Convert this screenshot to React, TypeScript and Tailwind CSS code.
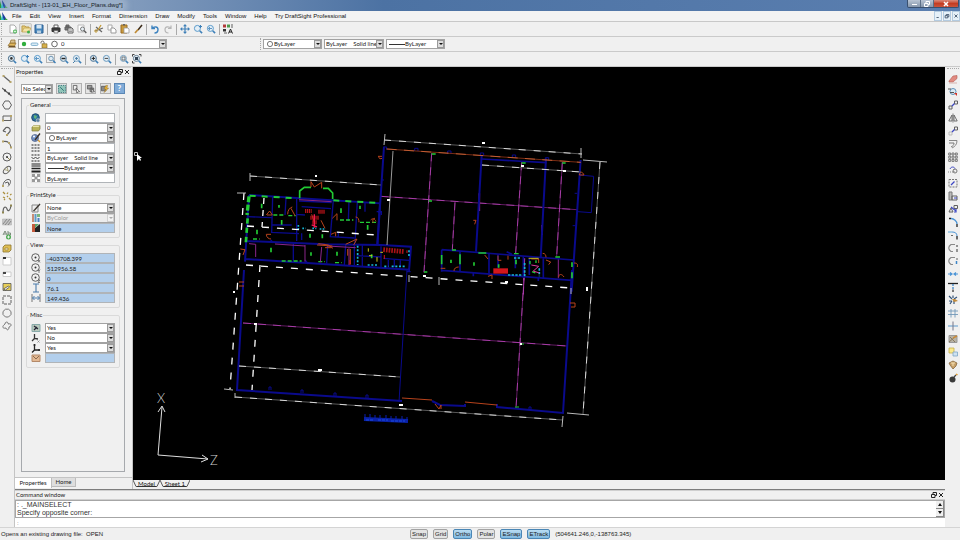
import type { ReactNode } from 'react'

/* ── Shared bits ──────────────────────────────── */

const INK = '#606060'
const BLUE = '#3f80b8'

function Icon({ children, className = '' }: { children: ReactNode; className?: string }) {
  return (
    <svg viewBox="0 0 10 10" className={`size-[10px] shrink-0 ${className}`} fill="none" stroke={INK} aria-hidden="true">
      {children}
    </svg>
  )
}

function ToolButton({ label, active, children }: { label: string; active?: boolean; children: ReactNode }) {
  return (
    <button
      aria-label={label}
      className={`flex size-[13px] shrink-0 items-center justify-center rounded-xs ${active ? 'bg-[#e4e4de] outline -outline-offset-1 outline-[#c6c6c6]' : ''}`}>
      <Icon>{children}</Icon>
    </button>
  )
}

function Separator() {
  return <span className="mx-px h-[11px] w-[2px] shrink-0 border-r border-[#a9a9a9]" />
}

function Grip({ className = '' }: { className?: string }) {
  return <span className={`h-3 w-[2px] shrink-0 border-l border-dotted border-[#a8a8a8] ${className}`} />
}

type ComboProps = {
  label: string
  value: string
  className?: string
  pad?: string
  disabled?: boolean
  prefix?: ReactNode
}

function Combo({ label, value, className = '', pad = 'pl-px', disabled, prefix }: ComboProps) {
  return (
    <span className={`grid h-[10px] items-center border border-[#a2a2a2] ${disabled ? 'bg-[#ececec] text-[#999]' : 'bg-white text-[#222]'} ${className}`}>
      <select
        aria-label={label}
        disabled={disabled}
        className={`col-start-1 row-start-1 h-2 w-full appearance-none whitespace-pre text-[6px]/[8px] ${pad}`}>
        <option>{value}</option>
      </select>
      <span className="pointer-events-none col-start-1 row-start-1 flex items-center justify-self-start">{prefix}</span>
      <span
        className={`pointer-events-none col-start-1 row-start-1 flex h-2 w-[7px] items-center justify-center justify-self-end border ${disabled ? 'border-[#d0d0d0] bg-[#f2f2f2]' : 'border-[#9a9a9a] bg-[#dcdcdc]'}`}>
        <svg viewBox="0 0 4 2" className="h-[2px] w-1 shrink-0">
          <path d="M0 0h4L2 2z" fill={disabled ? '#aaa' : '#111'} />
        </svg>
      </span>
    </span>
  )
}

const ring = (
  <svg viewBox="0 0 8 8" className="ml-0.5 size-2" fill="#fff" stroke="#555" strokeWidth=".8">
    <circle cx="4" cy="4" r="2.6" />
  </svg>
)

const rule = <span className="ml-0.5 h-px w-4 bg-[#333]" />

function Lens({ children, color = BLUE }: { children?: ReactNode; color?: string }) {
  return (
    <>
      <circle cx="4.4" cy="4.4" r="3" fill="#e3eef6" stroke={color} />
      <path d="M6.7 6.7l2.4 2.4" stroke={BLUE} strokeWidth="1.6" />
      {children}
    </>
  )
}

/* ── Title and menu ───────────────────────────── */

function Logo() {
  return (
    <svg viewBox="0 0 8 9" className="h-[9px] w-2 shrink-0" aria-hidden="true">
      <path d="M0 1v7h2z" fill="#2b9d3f" />
      <path d="M2 0l5 8H3z" fill="#1d3b9b" />
      <path d="M2 3l2 5H1z" fill="#35b9c9" />
      <path d="M5 6l3 2H5z" fill="#3caa3c" />
    </svg>
  )
}

function TitleBar() {
  return (
    <header className="flex h-[11px] items-start bg-linear-to-r from-[#9db0c9] via-[#4c72a3] via-40% to-[#5b7fb0]">
      <Logo />
      <h1 className="rounded-full bg-[#a9bbd1]/60 px-0.5 text-[6px]/[11px] text-[#161c26] shadow-[0_0_5px_3px_#a9bbd199]">
        DraftSight - [13-01_EH_Floor_Plans.dwg*]
      </h1>
      <div className="mr-px ml-auto flex h-2 overflow-hidden rounded-b-xs border border-t-0 border-[#39506f]">
        <button aria-label="Minimize" className="flex w-[13px] items-end justify-center border-r border-[#5d6f87] bg-linear-to-b from-[#b9c5d4] to-[#8797ac] pb-[2px]">
          <span className="h-px w-[5px] bg-white" />
        </button>
        <button aria-label="Restore" className="flex w-[13px] items-center justify-center border-r border-[#5d6f87] bg-linear-to-b from-[#b9c5d4] to-[#8797ac]">
          <svg viewBox="0 0 6 6" className="size-[6px]" fill="none" stroke="#fff">
            <path d="M2 2V.5h3.5v3H4M.5 2.5H4v3H.5z" />
          </svg>
        </button>
        <button aria-label="Close" className="flex w-6 items-center justify-center bg-linear-to-b from-[#d98b7c] via-[#c43c22] to-[#c9543c]">
          <svg viewBox="0 0 6 6" className="size-[6px]" stroke="#fff" strokeWidth="1.5">
            <path d="M1 1l4 4M5 1L1 5" />
          </svg>
        </button>
      </div>
    </header>
  )
}

const MENUS = ['File', 'Edit', 'View', 'Insert', 'Format', 'Dimension', 'Draw', 'Modify', 'Tools', 'Window', 'Help', 'Try DraftSight Professional']

const MDI_BUTTONS = [
  ['Minimize drawing', 'M2 6h3'],
  ['Restore drawing', 'M3 3.5V2h3.5v3H5M1.5 3.5H5v3H1.5z'],
  ['Close drawing', 'M2 2l4 4M6 2L2 6'],
]

function MenuBar() {
  return (
    <nav className="flex h-[11px] items-center border-b border-[#c8c8c8] bg-[#f3f3f3] text-[6px]/[10px] text-[#111]">
      <Logo />
      <div className="ml-1 flex gap-2">
        {MENUS.map((m) => (
          <button key={m} className="whitespace-nowrap">{m}</button>
        ))}
      </div>
      <div className="ml-auto flex gap-px">
        {MDI_BUTTONS.map(([name, d]) => (
          <button key={name} aria-label={name} className="border border-[#b4cbe0] bg-[#e6f0f8]">
            <svg viewBox="0 0 8 8" className="h-2 w-[6px]" fill="none" stroke="#44576e" strokeWidth="1.2">
              <path d={d} />
            </svg>
          </button>
        ))}
      </div>
    </nav>
  )
}

/* ── Toolbars ─────────────────────────────────── */

const page = 'M2 1h4l2 2v6H2z'

function StandardBar() {
  return (
    <div className="flex h-[15px] items-center border-b border-[#cacaca]">
      <Grip className="mr-[3px] ml-px" />
      <ToolButton label="New">
        <path d={page} fill="#fff" stroke="#aaa" />
        <circle cx="7" cy="7.5" r="2" fill="#3fae49" stroke="none" />
        <path d="M7 6.2v2.6M5.7 7.5h2.6" stroke="#fff" strokeWidth=".7" />
      </ToolButton>
      <ToolButton label="Open" active>
        <path d="M1 8V2h3l1 1h3v2" fill="#e5cd7a" stroke="#bd9d4b" />
        <path d="M1 8l2-4h7L8 8z" fill="#f3e4a6" stroke="#bd9d4b" strokeWidth=".7" />
        <circle cx="7.5" cy="8" r="1.5" fill="#3fae49" stroke="none" />
      </ToolButton>
      <ToolButton label="Save">
        <path d="M1 1h8v8H1z" fill="#4787bd" stroke="#2b5f93" />
        <path d="M2.5 1h5v3.5h-5z" fill="#d7e7f3" stroke="none" />
        <path d="M3 6.5h4V9H3z" fill="#b9cfe0" stroke="none" />
      </ToolButton>
      <Separator />
      <ToolButton label="Print">
        <path d="M3 1h4v3H3z" fill="#fff" />
        <path d="M1 4h8v3.5H1z" fill="#3c3c3c" stroke="#333" />
        <path d="M3 6.5h4V9H3z" fill="#eee" strokeWidth=".7" />
      </ToolButton>
      <ToolButton label="Print preview">
        <path d="M2 1h3v2H2zM1 3h6v3H1z" fill="#777" />
        <path d="M4 4h4l1 1v4H4z" fill="#eee" />
        <path d="M5 6h3M5 7.5h3" strokeWidth=".6" />
      </ToolButton>
      <ToolButton label="Page setup">
        <path d="M1 1h6v7H1z" fill="#fff" stroke="#bbb" />
        <circle cx="5.5" cy="5" r="2" fill="#e8f0f5" strokeWidth=".8" />
        <path d="M7 6.5L9.3 9" strokeWidth="1.4" />
      </ToolButton>
      <Separator />
      <ToolButton label="Cut">
        <path d="M1 7l8-3M2 3l6 5" stroke="#666" strokeWidth="1.2" />
        <circle cx="2" cy="7" r="1.2" stroke="#c29a36" />
        <path d="M7 1L4 6" stroke="#c29a36" strokeWidth="1.3" />
      </ToolButton>
      <ToolButton label="Copy">
        <path d="M1 1h4v5H1z" fill="#fff" stroke="#aaa" />
        <path d="M4 4h3l2 2v3H4z" fill="#fff" stroke="#999" />
      </ToolButton>
      <ToolButton label="Paste">
        <path d="M1 1h6v8H1z" fill="#c99a3d" stroke="#9b6d22" />
        <path d="M3 .8h2" stroke="#666" strokeWidth="1.4" />
        <path d="M4 4h4l1 1v4H4z" fill="#fff" stroke="#999" strokeWidth=".8" />
      </ToolButton>
      <ToolButton label="Property painter">
        <path d="M9 1L5 6" stroke="#3a2a18" strokeWidth="1.5" />
        <path d="M5 5.5L2 9" stroke="#c08b35" strokeWidth="1.7" />
      </ToolButton>
      <Separator />
      <ToolButton label="Undo">
        <path d="M2 1.5v3h3M2 4.5C4 2 8 2.5 8 5.5 8 8 6 9 4.500 9" stroke="#3c82bf" strokeWidth="1.4" />
      </ToolButton>
      <ToolButton label="Redo">
        <path d="M8 1.5v3H5M8 4.5C6 2 2 2.5 2 5.5 2 8 4 9 5.500 9" stroke="#b5b5b5" strokeWidth="1.2" />
      </ToolButton>
      <Separator />
      <ToolButton label="Pan">
        <path d="M5 0l2 2.2H3zM5 10l2-2.2H3zM0 5l2.2-2v4zM10 5L7.800 3v4z" fill={BLUE} stroke="none" />
        <path d="M5 2v6M2 5h6" stroke={BLUE} strokeWidth="1.2" />
      </ToolButton>
      <ToolButton label="Zoom dynamic">
        <Lens color="#5b9bcb"><path d="M7.5 1v3M6 2.500h3" stroke={BLUE} /></Lens>
      </ToolButton>
      <ToolButton label="Zoom previous">
        <Lens color="#5b9bcb"><path d="M6 4.5H2.500L4 3M2.500 4.500L4 6" stroke={BLUE} strokeWidth=".8" /></Lens>
      </ToolButton>
      <Separator />
      <ToolButton label="Properties">
        <path d="M0 .5h3v3H0z" fill="#b23b3b" stroke="none" />
        <path d="M4 .5h3v3H4z" fill="#4b9a4b" stroke="none" />
        <path d="M0 5h3v2.5H0z" fill="#333" stroke="none" />
        <path d="M8 1h2M8 3h2M1 9h3" />
        <path d="M5.5 9.5L7.500 5l2 4.500M6.200 8h2.500" stroke="#222" />
      </ToolButton>
    </div>
  )
}

function LayerBar() {
  return (
    <div className="flex h-[15px] items-center border-b border-[#cacaca] font-[Lato,sans-serif]">
      <Grip className="mr-[3px] ml-px" />
      <button aria-label="Layers manager" className="mr-px flex w-[11px] justify-center">
        <Icon>
          <path d="M1 6.5L3 4h6L7.500 7z" fill="#e3b95d" stroke="#8c6a2c" strokeWidth=".7" />
          <path d="M1 8.5L2 7h6l1 1.500z" fill="#705327" stroke="none" />
          <path d="M4 1h4v3H3z" fill="#d9c190" stroke="#8c6a2c" strokeWidth=".7" />
        </Icon>
      </button>
      <Combo
        label="Layer"
        value="0"
        className="w-[149px]"
        pad="pl-[42px]"
        prefix={
          <svg viewBox="0 0 42 8" className="h-2 w-[42px]" fill="none">
            <circle cx="5" cy="4" r="2.2" fill="#2fae3c" />
            <rect x="12" y="3" width="7" height="2.5" rx="1.2" fill="#d9ebf5" stroke="#5e9bc2" strokeWidth=".7" />
            <path d="M22 3.5V2.2c0-1.500 3-1.500 3 0V4" stroke="#666" />
            <path d="M23 3.8h5V8h-5z" fill="#d6b04c" stroke="#7e6427" strokeWidth=".6" />
            <circle cx="35.5" cy="4" r="2.8" fill="#fff" stroke="#444" strokeWidth=".8" />
          </svg>
        }
      />
      <Grip className="mr-px ml-[93px]" />
      <Combo label="Line color" value="ByLayer" className="w-[59px]" pad="pl-[10px]" prefix={ring} />
      <Combo label="Line style" value={'ByLayer\u2003 Solid line'} className="ml-[2px] w-[60px]" />
      <Combo label="Line weight" value="ByLayer" className="ml-[2px] w-[59px]" pad="pl-[18px]" prefix={rule} />
    </div>
  )
}

function ZoomBar() {
  return (
    <div className="flex h-[15px] items-center border-b border-[#cacaca]">
      <Grip className="mr-[2px] ml-px" />
      <ToolButton label="Zoom in on point"><Lens color="#456b88"><circle cx="4.4" cy="4.4" r="1.3" fill="#333" stroke="none" /></Lens></ToolButton>
      <ToolButton label="Zoom dynamic view"><Lens color="#5b9bcb"><path d="M7.5 1v3M6 2.500h3" stroke={BLUE} /></Lens></ToolButton>
      <ToolButton label="Zoom back"><Lens color="#5b9bcb"><path d="M6 4.5H2.500L4 3M2.500 4.500L4 6" stroke={BLUE} strokeWidth=".8" /></Lens></ToolButton>
      <ToolButton label="Zoom window">
        <path d="M.5.5h8v8h-8z" stroke="#777" strokeDasharray="1 1" />
        <circle cx="5" cy="4.5" r="2.3" fill="#dfeaf2" stroke="#6e96b4" />
        <path d="M7 6.5L9.500 9" stroke={BLUE} strokeWidth="1.5" />
      </ToolButton>
      <ToolButton label="Zoom factor"><Lens color="#567f9f"><path d="M2.5 4.5h4" stroke="#222" strokeWidth="1.5" /></Lens></ToolButton>
      <ToolButton label="Zoom center"><Lens color="#7da7c6"><path d="M1 9l2-2M4.4 3v3M3 4.4h3" stroke="#4a7fa8" /></Lens></ToolButton>
      <Separator />
      <ToolButton label="Zoom in"><Lens color="#4c7495"><path d="M4.4 2.6v3.6M2.6 4.4h3.6" stroke="#222" /></Lens></ToolButton>
      <ToolButton label="Zoom out"><Lens color="#6b9cc0"><path d="M2.6 4.4h3.6" stroke="#444" /></Lens></ToolButton>
      <Separator />
      <ToolButton label="Zoom bounds"><Lens color="#79a0bd"><path d="M3 3h3v3H3z" strokeWidth=".8" /></Lens></ToolButton>
      <ToolButton label="Zoom fit">
        <Lens color="#667f94">
          <path d="M.5 2.5v-2h2M7 .5h2v2M.5 7v2h2" stroke="#444" />
          <path d="M3 3h3v3H3z" fill="#345" stroke="none" />
        </Lens>
      </ToolButton>
    </div>
  )
}

const DRAW_TOOLS: [string, ReactNode][] = [
  ['Line', <><path d="M1.5 2l7 6" strokeWidth="1.2" /><path d="M.5 1h2v2h-2zM7.5 7h2v2h-2z" fill="#b6a46a" stroke="none" /></>],
  ['Infinite line', <><path d="M0 1l9.5 8" strokeWidth="1.2" /><path d="M2 2.5h2v2H2zM6 5.500h2v2H6z" fill="#444" stroke="none" /></>],
  ['Polygon', <path d="M3 1h4l2.5 4L7 9H3L.5 5z" />],
  ['Rectangle', <><path d="M1 3h8v4.5H1z" /><path d="M0 6.5h2v2H0zM8 2h2v2H8z" fill="#b6a46a" stroke="none" /></>],
  ['Polyline', <><path d="M1 5l3-3.5c3-.5 5 1.500 4 4L5 9M1 5l3 1" strokeWidth="1.2" /><path d="M4 8h2v2H4z" fill="#b6a46a" stroke="none" /></>],
  ['Arc', <><path d="M1 2.5c5-1 7.500 2 8 6" strokeWidth="1.2" /><path d="M0 1.5h2v2H0zM6 3h2v2H6zM8 7.500h2v2H8z" fill="#b6a46a" stroke="none" /></>],
  ['Circle', <><circle cx="5" cy="5" r="4" /><path d="M5 5l3 3" stroke="#8e8550" /><circle cx="5" cy="5" r="1" fill="#333" stroke="none" /></>],
  ['Ellipse', <><ellipse cx="5" cy="5" rx="4.5" ry="2.5" transform="rotate(-45 5 5)" /><path d="M2 4.5l4 1M5 2l1.500 5" stroke="#8e8550" strokeWidth=".7" /></>],
  ['Elliptical arc', <><path d="M1 8c0-4 3-7 6-6.5 3 1 1 5-1 7" /><path d="M3 5l3-1 1 3" /><path d="M0 7h2v2H0z" fill="#b6a46a" stroke="none" /></>],
  ['Point', <path d="M1 1l2 2M6 1.5L5 3M1 6l2 1M5 5l1 1M8 4l1.500-1M7 7l2 2M2 9l1-1" stroke="#ab8f3c" strokeWidth="1.3" />],
  ['Spline', <><path d="M1 9c0-7 3-7 4-4s3 2 4-3" strokeWidth="1.2" /><path d="M8 .5h2v2H8zM0 7.5h2v2H0z" fill="#8e8550" stroke="none" /></>],
  ['Hatch', <><path d="M.5 2h9v6h-9z" fill="#c6c6c6" stroke="#aaa" strokeWidth=".5" /><path d="M1 7l4-5M3 8l5-6M6 8l3-4" stroke="#888" /></>],
  ['Note', <><path d="M1 5l2-4 2 4M2 4h2M6 1v4h2.5V3H6" stroke="#7a8b7a" /><circle cx="6.5" cy="7" r="2.5" fill="#4aa84f" stroke="none" /><path d="M6.5 5.5v3M5 7h3" stroke="#fff" strokeWidth=".8" /></>],
  ['Block', <><path d="M1 4l2-2h6v5l-2 2H1z" fill="#dfbf55" stroke="#8a742e" strokeWidth=".8" /><path d="M3 5h3v2H3z" fill="#f7ecc0" stroke="#8a742e" strokeWidth=".6" /></>],
  ['Insert block', <><path d="M1 1.5h8v7.500H1z" fill="#fff" stroke="#ccc" /><path d="M1 1h3v2H1z" fill="#333" stroke="none" /></>],
  ['Region', <><path d="M1 3h8v4.5H1z" fill="#fff" stroke="#ccc" /><path d="M1 3h3v2H1z" fill="#444" stroke="none" /></>],
  ['Mask', <><path d="M1 1.5h8v7H1z" fill="#e8cf58" stroke="#555" strokeWidth=".8" /><path d="M1.5 7l5-3 1 1-4 3z" fill="#f5f5f5" stroke="#444" strokeWidth=".7" /></>],
  ['Boundary', <path d="M1 1h8v8H1z" strokeDasharray="3 1" />],
  ['Ring', <path d="M3.5 1.2h3L9 3.500v3L6.500 9h-3L1 6.500v-3z" stroke="#777" />],
  ['Revision cloud', <path d="M3 3c0-3 4-2 3 0 4-1 4 2 1 3 0 3-2 4-3 1-4 1-4-2-1-4z" stroke="#777" />],
]

const MODIFY_TOOLS: [string, ReactNode][] = [
  ['Delete', <><path d="M1 7l4-5 4-.5v3L5 8H1z" fill="#e08a80" stroke="#b35a50" strokeWidth=".6" /><path d="M1 9h8" stroke="#d8b3ae" /></>],
  ['Smart select', <><circle cx="5" cy="4.5" r="3" fill="#dceaf4" stroke="#5c92ba" /><path d="M0 2h3M2 5.5h4" stroke="#555" /><path d="M6 6h3v3z" fill="#d4372c" stroke="none" /></>],
  ['Copy entity', <><path d="M1 6h3v3H1zM6.5 1h3v3h-3z" /><path d="M4 6l2.5-2.500" stroke="#3b46c4" strokeWidth="1.3" /></>],
  ['Mirror', <><path d="M5 .5v9" stroke="#777" /><path d="M4 2v6H.8zM6 2v6h3.2z" strokeWidth=".9" /></>],
  ['Move', <><path d="M1 6h3v3H1z" stroke="#bbb" /><path d="M6.5 1h3v3h-3z" /><path d="M4 6l2.5-2.500" stroke="#3b46c4" strokeWidth="1.3" /></>],
  ['Offset', <><path d="M1 1.5h8c0 4-2 6-5 7.500" stroke="#888" /><path d="M1 4h5c0 2-1 3-3 4" stroke="#777" /></>],
  ['Pattern', <path d="M.7 1h2v2h-2zM4 1h2v2H4zM7.3 1h2v2h-2zM.7 4.2h2v2h-2zM4 4.2h2v2H4zM7.3 4.2h2v2h-2zM.7 7.4h2v2h-2zM4 7.4h2v2H4zM7.3 7.4h2v2h-2z" strokeWidth=".8" />],
  ['Rotate', <><path d="M0 7h6V4" stroke="#888" strokeDasharray="1 1" /><circle cx="7" cy="6" r="2" stroke="#777" /><path d="M2 4c1-2.5 4-2.5 5-.5" stroke="#3b46c4" /></>],
  ['Scale', <><path d="M1 1.5h8V9H1z" stroke="#777" strokeDasharray="2 1" /><path d="M3 7l3.5-3.500" stroke="#3b46c4" strokeWidth="1.2" /></>],
  ['Stretch', <><path d="M1 1h3v8H1z" fill="#bbb" stroke="#777" /><path d="M4 5h5v4H4z" /><path d="M6 7h3" stroke="#3b46c4" /></>],
  ['Edit length', <><path d="M1 8l2-4 2 4zM6 1.5h3.500v3H6z" /><path d="M3 3l5 4M8 5v3H6" stroke="#3b46c4" strokeWidth="1.2" /></>],
  ['Fillet', <><path d="M1 1.5h2M9 7v3" stroke="#222" strokeWidth="1.3" /><path d="M3 1.5c3 0 6 3 6 5.500" stroke="#4b94d6" strokeWidth="1.3" /></>],
  ['Chamfer', <><path d="M0 2h4" stroke="#5aa5d8" /><path d="M4 2c3 0 5 1 5 4" stroke="#4b94d6" /><path d="M9 6v3.5M4 5v1" stroke="#222" strokeWidth="1.3" /></>],
  ['Trim', <><path d="M7 1.5H3c-3 2-3 5 0 7h2" stroke="#888" strokeWidth="1.2" /><path d="M9 2v2M9 6v3" strokeWidth="1.3" /></>],
  ['Extend', <><path d="M7 1.5H3c-3 2-3 5 0 7h2" stroke="#888" strokeWidth="1.2" /><path d="M9 2v2" /><path d="M8.5 5v3" stroke="#3c86c8" strokeWidth="1.5" /></>],
  ['Split', <path d="M0 5h3M7 5h3M2 3.5L4 5 2 6.500M8 3.500L6 5l2 1.500" stroke="#4b94d6" strokeWidth="1.2" />],
  ['Weld', <><path d="M0 1.5h10" stroke="#222" strokeWidth="1.3" /><path d="M5 2v5" stroke="#3c86c8" strokeWidth="1.3" strokeDasharray="2 1" /><path d="M5 7.5V10" stroke="#333" strokeWidth="1.3" /></>],
  ['Explode', <><path d="M1 1l3 3M5 .5V3M9 2L6 4M1 6h3M2 9l2-3M6 9V6" stroke="#35557a" strokeWidth="1.2" /><path d="M4 4h3l3 2-4 1z" fill="#c08a3c" stroke="none" /></>],
  ['Power trim', <path d="M0 3h10M0 6.5h10M3 1v8.500M7 1v8.500" stroke="#7398b9" strokeWidth=".9" />],
  ['Corner trim', <><path d="M0 5h10" stroke="#5b98cc" /><path d="M5 .5v9" stroke="#778" /></>],
  ['Edit hatch', <><path d="M1 1.5h8v7H1z" fill="#b8b3a6" stroke="#999" /><path d="M1 8l7-6M2 3l5 5" stroke="#88795f" /><path d="M5 4l4-2" stroke="#c98b3a" strokeWidth="1.5" /></>],
  ['Display order', <><path d="M1 1h5v5H1z" fill="#fbe98c" stroke="#c7b04c" strokeWidth=".8" /><path d="M5 5h4.5v4H5z" fill="#cfe2f1" stroke="#7ea6c7" strokeWidth=".8" /></>],
  ['Clean', <><path d="M1 3l4-2 4 2-1 3-3 3-3-4z" fill="#c6a06a" stroke="#7d5c30" strokeWidth=".7" /><path d="M3 3h4M5 3v3" stroke="#f4e0b4" /></>],
  ['Purge', <><circle cx="4.5" cy="6.5" r="3" fill="#3a3a3a" stroke="none" /><path d="M6 4l2-2" stroke="#444" strokeWidth="1.2" /><path d="M8 1l1.5 1" stroke="#e09a2d" strokeWidth="1.5" /></>],
]

function SideBar({ label, tools, className = '' }: { label: string; tools: [string, ReactNode][]; className?: string }) {
  return (
    <aside aria-label={label} className={`flex w-[15px] shrink-0 flex-col items-center pt-px ${className}`}>
      <span className="mb-[3px] w-3 border-t border-dotted border-[#a8a8a8]" />
      {tools.map(([name, art]) => (
        <ToolButton key={name} label={name}>{art}</ToolButton>
      ))}
    </aside>
  )
}

/* ── Properties dock ──────────────────────────── */

function DockButtons() {
  return (
    <span className="ml-auto flex gap-px">
      <button aria-label="Float">
        <svg viewBox="0 0 6 6" className="size-[6px]" fill="none" stroke="#222"><path d="M2 2V.5h3.5v3H4M.5 2.5H4v3H.5z" /></svg>
      </button>
      <button aria-label="Close">
        <svg viewBox="0 0 6 6" className="size-[6px]" stroke="#222"><path d="M1 1l4 4M5 1L1 5" /></svg>
      </button>
    </span>
  )
}

const target = (mark: ReactNode) => (
  <><circle cx="4.5" cy="4.5" r="3.8" /><circle cx="4.5" cy="4.5" r="1" fill="#333" stroke="none" />{mark}</>
)

type Field = { name: string; icon: ReactNode; value: string; kind: 'text' | 'locked' | 'combo'; pad?: string; prefix?: ReactNode; disabled?: boolean }

const GROUPS: { title: string; fields: Field[] }[] = [
  {
    title: 'General',
    fields: [
      { name: 'Hyperlink', kind: 'text', value: '', icon: <><circle cx="4.5" cy="4.5" r="3.8" fill="#2d6f9e" stroke="#1f4d70" /><path d="M3 2l3 1-1 3-2-1z" fill="#62b47a" stroke="none" /><circle cx="7" cy="7.5" r="1.8" fill="#5b7fa0" stroke="#ddd" strokeWidth=".6" /></> },
      { name: 'Layer', kind: 'combo', value: '0', icon: <><path d="M1 4l2-1.5h6V6L7.500 8H1z" fill="#b9b35a" stroke="#7d7939" strokeWidth=".7" /><path d="M1 4l2-1.5h6L7.500 4z" fill="#e9e4a8" stroke="none" /></> },
      { name: 'Line color', kind: 'combo', value: 'ByLayer', pad: 'pl-[10px]', prefix: ring, icon: <><circle cx="4" cy="5" r="3.5" fill="#6f8fc4" stroke="#4d5c80" strokeWidth=".7" /><path d="M9 .5L4 7" stroke="#3a2f28" strokeWidth="1.3" /><path d="M7 7l2 2" stroke="#d49a36" strokeWidth="1.3" /><circle cx="3" cy="3.5" r="1" fill="#fff" stroke="none" /></> },
      { name: 'Line scale', kind: 'text', value: '1', icon: <path d="M.5 2h9M.5 5h9M.5 8h9" stroke="#222" strokeWidth="1.2" strokeDasharray="2 1" /> },
      { name: 'Line style', kind: 'combo', value: 'ByLayer\u2003 Solid line', icon: <><path d="M.5 2h9M.5 8h9" stroke="#222" strokeWidth="1.2" strokeDasharray="2 1" /><path d="M.5 4l2 2 2-2 2 2 2-2" stroke="#444" /></> },
      { name: 'Line weight', kind: 'combo', value: 'ByLayer', pad: 'pl-[18px]', prefix: rule, icon: <><path d="M.5 1h9M.5 3h9" stroke="#222" /><path d="M.5 5.5h9" stroke="#222" strokeWidth="1.5" /><path d="M.5 8.5h9" stroke="#222" strokeWidth="2" /></> },
      { name: 'Transparency', kind: 'text', value: 'ByLayer', icon: <><path d="M.5.5h9v9h-9z" fill="#fff" stroke="#ccc" strokeWidth=".5" /><path d="M1 1h3v3H1zM6 1h3v3H6zM3.5 3.5h3v3h-3zM1 6h3v3H1zM6 6h3v3H6z" fill="#999" stroke="none" /></> },
    ],
  },
  {
    title: 'PrintStyle',
    fields: [
      { name: 'Print style', kind: 'combo', value: 'None', icon: <><path d="M1 2h6v7H1z" fill="#eee" stroke="#888" /><path d="M9 1L4 6.5M2.500 8l2-2" stroke="#3f3a33" strokeWidth="1.4" /></> },
      { name: 'Print style mode', kind: 'combo', value: 'ByColor', disabled: true, icon: <><path d="M1 1h2v8H1z" fill="#c98d76" stroke="none" /><path d="M3.5 1h2v8h-2z" fill="#5d9bc7" stroke="none" /><path d="M6 1h3v3H6z" fill="#7db57d" stroke="none" /><path d="M6.5 5h2v4h-2z" fill="#4a7fc0" stroke="none" /></> },
      { name: 'Print style table', kind: 'locked', value: 'None', icon: <><path d="M1 1h3v8H1z" fill="#c45a3c" stroke="none" /><path d="M4 9V5l5-4v8z" fill="#222" stroke="none" /><path d="M4 1h4L4 5z" fill="#5aa36a" stroke="none" /></> },
    ],
  },
  {
    title: 'View',
    fields: [
      { name: 'Center X', kind: 'locked', value: '-403708.399', icon: target(<path d="M7 7l2 2.5M9 7L7 9.500" strokeWidth=".8" />) },
      { name: 'Center Y', kind: 'locked', value: '512956.58', icon: target(<path d="M7 6.5L8 8l1-1.500M8 8v2" strokeWidth=".8" />) },
      { name: 'Center Z', kind: 'locked', value: '0', icon: target(<path d="M7 7h2L7 9.5h2" strokeWidth=".8" />) },
      { name: 'Height', kind: 'locked', value: '76.1', icon: <path d="M2 1h6M2 9h6M5 1.5v7" stroke="#4d7cab" strokeWidth="1.1" /> },
      { name: 'Width', kind: 'locked', value: '149.436', icon: <><path d="M1 1v8M9 1v8" stroke="#777" /><path d="M1.5 5h7M3.500 3L1.500 5l2 2M6.500 3l2 2-2 2" stroke="#4d7cab" /></> },
    ],
  },
  {
    title: 'Misc',
    fields: [
      { name: 'CCS icon on', kind: 'combo', value: 'Yes', icon: <><path d="M1 1.5h8v7H1z" fill="#b8c9bd" stroke="#8aa" /><path d="M3 7l3-3M3 3l4 3" stroke="#223" strokeWidth="1.2" /></> },
      { name: 'CCS icon at origin', kind: 'combo', value: 'No', icon: <><path d="M3.5 1v4.5L7 6M3.500 5.500L1 8" stroke="#333" strokeWidth="1.3" /><path d="M6.5 7.5l2 2M8.500 7.500l-2 2" stroke="#888" strokeWidth=".8" /></> },
      { name: 'CCS per viewport', kind: 'combo', value: 'Yes', icon: <path d="M3.5 1v6H9M3.500 7L1 9.500M2.500 2h2M8 6v2" stroke="#222" strokeWidth="1.3" /> },
      { name: 'CCS name', kind: 'locked', value: '', icon: <><path d="M1 2h8v6.5H1z" fill="#e3b892" stroke="#b48a6a" /><path d="M2 3l3 3 3-3" stroke="#8a6b50" /></> },
    ],
  },
]

function FieldRow({ field }: { field: Field }) {
  return (
    <div className="flex h-[10px] items-center">
      <Icon className="mr-1 ml-1">{field.icon}</Icon>
      {field.kind === 'combo' ? (
        <Combo label={field.name} value={field.value} pad={field.pad} prefix={field.prefix} disabled={field.disabled} className="min-w-0 flex-1" />
      ) : (
        <input
          aria-label={field.name}
          defaultValue={field.value}
          readOnly={field.kind === 'locked'}
          className={`h-[10px] min-w-0 flex-1 border border-[#b0b4b8] pl-px text-[6px]/[8px] text-[#222] ${field.kind === 'locked' ? 'bg-[#b3cfec]' : 'bg-white'}`}
        />
      )}
    </div>
  )
}

const SELECT_TOOLS: [string, ReactNode][] = [
  ['Select all', <><path d="M1 1h8v8H1z" fill="#8fc4b8" stroke="#2f6f75" strokeDasharray="1.5 1" /><path d="M3 3l4 4" stroke="#2f6f75" /></>],
  ['Select', <><path d="M2 1h4v5H2z" fill="#eee" /><path d="M5 4l4 4-2 .2-1 1.3z" fill="#fff" stroke="#333" strokeWidth=".7" /></>],
  ['Select window', <><path d="M1 1h5v4H1zM4 4h4v4H4z" fill="#999" /><path d="M6 5l3 3H7l-1 1z" fill="#fff" stroke="#333" strokeWidth=".6" /></>],
  ['Quick select', <><path d="M1 2h5v5H1z" fill="#888" /><path d="M6 1L4 5h2L4 9l5-5H7l1-3z" fill="#e6b53c" stroke="#8f6a1e" strokeWidth=".5" /></>],
]

function PropertiesDock() {
  return (
    <section className="flex w-[118px] shrink-0 flex-col border-r border-[#c4c4c4] font-[Lato,sans-serif] text-[6px]/[8px] text-[#222]">
      <div className="mx-px flex h-[10px] items-center border-y border-[#cfcfcf] pr-px">
        <h2>Properties</h2>
        <DockButtons />
      </div>
      <div className="mt-[6px] mr-[7px] ml-[6px] flex items-center justify-between">
        <Combo label="Selection" value="No Select" className="w-8" pad="pl-px" />
        {SELECT_TOOLS.map(([name, art]) => (
          <button key={name} aria-label={name} className="flex size-[11px] items-center justify-center border border-[#b0b0b0] bg-[#e4e4e4]">
            <Icon className="scale-90">{art}</Icon>
          </button>
        ))}
        <button aria-label="Help" className="size-[11px] border border-[#5b87b5] bg-[#7fabd8] text-center text-[8px]/[9px] font-bold text-white">?</button>
      </div>
      <div className="mt-[4px] mr-[7px] ml-[6px] flex flex-1 flex-col gap-[3px] border border-[#a6a9ad] px-1 pt-[2px]">
        {GROUPS.map((g) => (
          <fieldset key={g.title} className="min-w-0 rounded-xs border border-[#dadada] pt-[4px] pr-1 pb-[4px]">
            <legend className="ml-[2px] px-px">{g.title}</legend>
            {g.fields.map((f) => (
              <FieldRow key={f.name} field={f} />
            ))}
          </fieldset>
        ))}
      </div>
      <div role="tablist" className="mt-[5px] mb-px flex h-[11px] border-t border-[#c4c4c4]">
        <button role="tab" aria-selected="true" className="w-[37px] border-r border-[#bdbdbd] bg-white">Properties</button>
        <button role="tab" aria-selected="false" className="mb-px w-6 border-r border-b border-[#bdbdbd] bg-[#dedede]">Home</button>
      </div>
    </section>
  )
}

/* ── Floor plan ───────────────────────────────── */

const WALL = '#0a0a8c'
const MAGENTA = '#8c268c'
const ORANGE = '#b8431c'
const GREEN = '#22cc34'
const CYAN = '#17b7d6'

// A dimension line: a grey hairline with brighter dashes on top
function Dim({ d }: { d: string }) {
  return (
    <>
      <path d={d} stroke="#5a5a5a" />
      <path d={d} stroke="#d8d8d8" strokeDasharray="7 8" />
    </>
  )
}

function OfficeWing() {
  return (
    <g transform="translate(92 98) scale(.3333)" strokeWidth="3">
      <g stroke={WALL} strokeWidth="4">
        <path d="M72 90L465 115L457 240M72 90L60 290M62 228L300 238L470 240L558 245L552 318M60 282L555 314" strokeWidth="6" />
        <path d="M67 155L140 158M143 95L140 202L222 206M183 98L180 150M215 100V228M222 108L320 113M230 125L318 131M325 105L316 215L388 219M372 108L370 168M397 110L390 235M215 148L240 150M205 235V288M308 240L305 296M362 240L358 302M388 240V300M412 240V305M468 244V308M395 272L470 276M475 280L552 286M490 285V306M508 285V306M526 285V306M140 180H200M230 205V225M340 200V218M420 112V140" />
        <path d="M137 225l8 8M240 285l10 12M455 140h14v10M545 320h12" />
      </g>
      <g stroke={GREEN} strokeWidth="4">
        <path d="M72 94L66 150" strokeWidth="10" strokeDasharray="18 7" />
        <path d="M68 160L62 240" strokeWidth="8" strokeDasharray="16 12" />
        <path d="M74 92L215 100M325 106L462 114" strokeWidth="6" strokeDasharray="18 18" />
        <path d="M224 100V78L238 67H258M294 70H310L323 84V102" strokeWidth="5" />
        <path d="M145 150h30M190 152h22M345 165h40M405 172h50M84 222h20M170 288h60M280 290h20M330 293h20" strokeDasharray="12 6" />
        <path d="M110 116v14M162 120v8M170 165v14M348 130v14M405 122v10M428 180v14M96 194v14M138 248v14M255 206v12M258 262v10M336 260v12M440 268v12M292 208v12" strokeWidth="5" />
      </g>
      <g stroke={MAGENTA}>
        <path d="M222 104L320 110M72 236L92 238V276M150 237L240 243M240 240V290M290 246L286 292M305 243L392 248M372 250V300" />
      </g>
      <g stroke={ORANGE}>
        <path d="M258 66V50L268 66L290 52V70M124 150l10-12 8 12h-16M188 148c0-12 6-20 14-22M198 130l12 22M322 160l14-14v20M392 156c8 0 10 8 10 16M450 160c-8 0-8 10-4 14M124 208h14M124 208c0 10 8 14 14 14M46 252l14 2-6 16M318 208l14-6v12M276 240l46 3M300 248h20M362 238l34-16-10 18M376 252v46M368 252v20M270 178l-10-30M300 190l-12-24" />
        <path d="M280 236l30 4 14 10" />
      </g>
      <g stroke="#d3161c">
        <path d="M240 138h20M280 140h20M256 158h26M262 172h14" strokeWidth="12" strokeDasharray="4 2" opacity=".85" />
        <path d="M475 254L538 260" strokeWidth="14" strokeDasharray="5 3" opacity=".8" />
        <path d="M268 148v40M260 180l16 6" stroke="#f01a50" strokeWidth="4" />
        <path d="M478 270v12M375 285v14M546 256v8" />
      </g>
      <g stroke={CYAN} strokeWidth="5">
        <path d="M220 180v14M232 190h10M262 190h12M284 192h14" strokeDasharray="5 4" />
        <path d="M398 242V300M428 300h28M478 304h12M500 304h40M552 256v20" strokeDasharray="6 5" />
      </g>
      <path d="M432 272h10M456 276v14M430 250v10M466 262h8" stroke="#c9c51d" />
    </g>
  )
}

const HALL_AXES = ['M32 214L620 254', 'M185 85L162 442', 'M255 232L247 375', 'M455 112L437 385', 'M577 112L560 395', 'M464 400L460 510']

function Hall() {
  return (
    <g transform="translate(237 58) scale(.3333)" strokeWidth="3">
      <g stroke={MAGENTA}>
        {HALL_AXES.map((d) => (
          <g key={d}>
            <path d={d} opacity=".7" />
            <path d={d} stroke="#c44cc4" strokeDasharray="24 18" opacity=".7" />
          </g>
        ))}
        <path d="M328 205V258M516 300v30" strokeWidth="5" />
        <path d="M565 400v60" />
      </g>
      <g stroke={WALL}>
        <path d="M42 65L22 362M335 90L318 380M528 100L512 400M632 105L605 500" strokeWidth="6" />
        <path d="M335 102L530 113M215 374L610 405M215 436L606 466M215 374V440" strokeWidth="5" />
        <path d="M628 150L671 154L664 263L624 260" />
        <path d="M134 78v-8h10v8M233 86v-8h10v8M331 92v-8h10v8M427 98v-8h10v8M526 106v-8h10v8M42 66h8v8M34 165h8M24 262h10M614 205h8M608 302h8" />
        <path d="M270 378V438M357 386V450M460 394V458M520 400V462M384 388V428M436 392V430M478 400V450M410 380l16 8M310 444v10M505 458v10" strokeWidth="5" />
      </g>
      <path d="M50 72L632 112" stroke={ORANGE} strokeWidth="2" />
      <path d="M50 72L632 112" stroke="#d4693c" strokeDasharray="30 22" opacity=".8" />
      <g stroke={ORANGE}>
        <path d="M24 94h12M26 94c0 8 6 8 10 6M628 150c2-12 10-10 14 0H628M310 286h8l-4 12M344 390l10 12M252 438c0-8 6-12 14-12M212 430h14M354 454l12-4v12M384 392v14h10M414 392v12M484 402h22v12M528 405l14 6-6 8M518 385c8 0 10 6 10 12M566 456c0-10 10-10 16 0M612 414c10 0 12 4 10 12M2 285c6-6 12-4 16 4" />
      </g>
      <g stroke={GREEN} strokeWidth="4">
        <path d="M185 87h12M455 114h12M577 114h10M176 228h10M246 375h12M325 384h24M432 386h14M556 396h14M162 441h10" />
        <path d="M215 390v28M270 388v30M243 404v10M312 412v10M386 418v10M438 404v14M606 412v14M606 442v18" strokeWidth="5" />
        <path d="M480 408v10M498 406v8M486 440l10 4" />
      </g>
      <g stroke={CYAN} strokeWidth="5">
        <path d="M414 450h42M432 399h20M464 414v44M508 430v24" strokeDasharray="7 4" />
      </g>
      <path d="M370 438h44" stroke="#d3161c" strokeWidth="16" />
      <path d="M484 420l22 4-16 14 18 6" stroke="#e03aa0" />
      <path d="M476 400h30" stroke="#c9c51d" />
    </g>
  )
}

function Warehouse() {
  return (
    <g>
      {['M110 256L434 279', 'M391 211L383 341'].map((d) => (
        <g key={d}>
          <path d={d} stroke={MAGENTA} opacity=".7" />
          <path d={d} stroke="#c44cc4" strokeDasharray="8 7" opacity=".7" />
        </g>
      ))}
      <g stroke={WALL} strokeWidth="2">
        <path d="M111 203L104 323L269 334M439 203L430 346L364 340V337M299 334l8 4 25 1v-2" />
        <path d="M274 203L266 335" strokeWidth="1" />
        <path d="M136 323v-3h2v3M168 326v-3h2v3M201 329v-3h2v3M233 331v-3h2v3M396 343v-3h2v3" strokeWidth="1" />
      </g>
      <g stroke={ORANGE}>
        <path d="M269 331L299 333M332 335L364 338" />
        <path d="M106 215h5M106 219h5M437 236h5v4h-4M302 337l4 5 2-4v4" />
      </g>
      <path d="M387 277h4M382 340h4" stroke={GREEN} />
      <path d="M231 352L275 354" stroke="#0a22a8" strokeWidth="4" />
      <path d="M232 347v4M237 347v4M242 348v4M247 348v4M253 348v4M258 349v4M263 349v4M269 349v4M274 350v4" stroke="#0a1fb0" />
      <path d="M233 353h8M245 353h10M258 354h14" stroke="#1a4be0" strokeDasharray="3 1" />
    </g>
  )
}

function Drawing() {
  return (
    <svg viewBox="0 0 812 413" className="block w-full bg-black" fill="none" role="img" aria-label="Floor plan drawing">
      <Warehouse />
      <Hall />
      <OfficeWing />

      {/* dimensions */}
      <Dim d="M251 73L449 87" />
      <Dim d="M467 95L450 347" />
      <Dim d="M102 330L430 353" />
      <Dim d="M117 109L248 118" />
      <Dim d="M349 98L448 105" />
      <Dim d="M106 299L267 310" />
      <path d="M260 84L254 178" stroke="#9a9a9a" />
      <g stroke="#fff" strokeWidth="1.3">
        <path d="M111 126L97 322" strokeDasharray="7 8" />
        <path d="M127 198L119 323" strokeDasharray="7 8" />
        <path d="M131 131L129 160" strokeDasharray="6 6" />
        <path d="M113 198L438 221" strokeDasharray="7 8" />
        <path d="M114 159L244 168" strokeDasharray="7 8" />
      </g>
      <path
        d="M252 67L251 78M448 81V91M450 93L474 95M434 346L456 348M102 326V331M430 349L429 360M117 106V114M104 126H113M91 322L100 323M276 208V215M306 210V218M438 221V227"
        stroke="#b9b9b9"
      />
      <path
        d="M349 76h3M182 109h2M388 99h3M254 133h3M430 104h3M290 209h3M372 215h3M121 257h3M185 303h4M266 338h4M100 225h2M454 220v4M387 277h2"
        stroke="#fff"
        strokeWidth="2"
      />

      {/* axes */}
      <path d="M29 340L25 388L75 392M25 345l4-6 3 6M69 388l6 4-7 3" stroke="#dedede" />
      <g fill="#cfcfcf" className="font-[Lato,sans-serif] text-[13px] font-light">
        <text x="24" y="336">X</text>
        <text x="77" y="398">Z</text>
      </g>

      {/* cursor */}
      <path d="M1.5 85.500h3v3h-3z" stroke="#bbb" />
      <path d="M4 87v7l2-2 1 2 1-1-1-2h2z" fill="#fff" />
    </svg>
  )
}

function SheetTabs() {
  return (
    <div role="tablist" className="flex h-2 items-start bg-[#f0f0f0] font-[Lato,sans-serif] text-[6px]/[7px] text-[#111]">
      {['Model', 'Sheet 1'].map((t, i) => (
        <span key={t} className="flex">
          <svg viewBox="0 0 4 7" className="h-[7px] w-1" fill="none" stroke="#333" strokeWidth=".8"><path d="M0 0l3 6.5h1" /></svg>
          <button role="tab" aria-selected={i === 0} className="h-[7px] border-b border-[#333] px-px">{t}</button>
          <svg viewBox="0 0 4 7" className="h-[7px] w-1" fill="none" stroke="#333" strokeWidth=".8"><path d="M4 0L1 6.5H0" /></svg>
        </span>
      ))}
    </div>
  )
}

/* ── Bottom area ──────────────────────────────── */

function CommandWindow() {
  return (
    <section className="border-t border-[#7d7d7d]">
      <div className="flex h-[10px] items-center border-y border-[#cfcfcf] pr-px pl-px font-[Lato,sans-serif] text-[6px]/[8px] text-[#222]">
        <h2>Command window</h2>
        <DockButtons />
      </div>
      <div className="flex h-[18px] border border-[#a6a6a6] bg-white">
        <div className="flex-1 pl-px text-[7px]/[8px] whitespace-pre text-[#333]">
          <p>: ._MAINSELECT</p>
          <p>Specify opposite corner:</p>
        </div>
        <div className="flex w-2 flex-col">
          {['M0 3h4L2 0z', 'M0 0h4L2 3z'].map((d, i) => (
            <button key={d} aria-label={i ? 'Scroll down' : 'Scroll up'} className="flex flex-1 items-center justify-center border-r border-b border-[#888] bg-[#f0f0f0]">
              <svg viewBox="0 0 4 3" className="h-[3px] w-1"><path d={d} fill="#111" /></svg>
            </button>
          ))}
        </div>
      </div>
      <input aria-label="Command" defaultValue=":" className="block h-[9px] w-full bg-white pl-[2px] text-[6px]/[8px] text-[#555]" />
    </section>
  )
}

const TOGGLES: [string, boolean][] = [['Snap', false], ['Grid', false], ['Ortho', true], ['Polar', false], ['ESnap', true], ['ETrack', true]]

function StatusBar() {
  return (
    <footer className="grid h-[13px] grid-cols-[410fr_550fr] items-center border-t border-[#d4d4d4] text-[6px]/[8px] text-[#222]">
      <p className="pl-px whitespace-pre">Opens an existing drawing file:  OPEN</p>
      <div className="flex items-center gap-[5px]">
        {TOGGLES.map(([name, on]) => (
          <button
            key={name}
            aria-pressed={on}
            className={`h-[10px] rounded-xs border px-px ${on ? 'border-[#4a86b5] bg-linear-to-b from-[#b9dcf2] to-[#7fb9e0]' : 'border-[#a3a3a3] bg-[#e3e3e3]'}`}>
            {name}
          </button>
        ))}
        <span>(504641.246,0,-138763.345)</span>
      </div>
    </footer>
  )
}

export default function App() {
  return (
    <div className="flex min-h-screen flex-col bg-[#f0f0f0] font-['Liberation_Sans',Arial,sans-serif]">
      <TitleBar />
      <MenuBar />
      <StandardBar />
      <LayerBar />
      <ZoomBar />
      <main className="flex flex-1">
        <SideBar label="Draw" tools={DRAW_TOOLS} className="border-r border-[#c4c4c4]" />
        <div className="flex min-w-0 flex-1 flex-col">
          <div className="flex flex-1">
            <PropertiesDock />
            <div className="min-w-0 flex-1">
              <Drawing />
              <SheetTabs />
            </div>
          </div>
          <CommandWindow />
        </div>
        <SideBar label="Modify" tools={MODIFY_TOOLS} />
      </main>
      <StatusBar />
    </div>
  )
}
